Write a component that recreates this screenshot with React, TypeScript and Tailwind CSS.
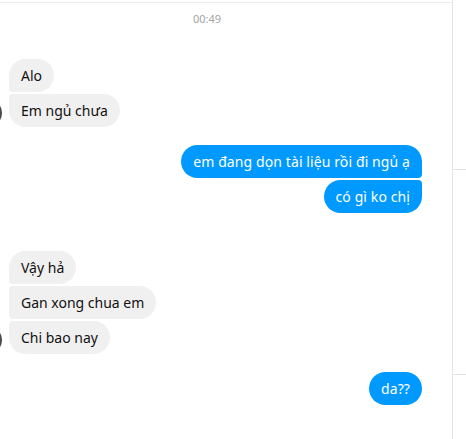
const left = [
  [{ text: "Alo" }, { text: "Em ngủ chưa", avatar: true }],
  [{ text: "Vậy hả" }, { text: "Gan xong chua em" }, { text: "Chi bao nay", avatar: true }],
];

function Them({ text, avatar, first, last }: { text: string; avatar?: boolean; first: boolean; last: boolean }) {
  return (
    <div className="flex items-end">
      <div className={`ml-[-26px] mr-[7px] h-7 w-7 shrink-0 rounded-full ${avatar ? "bg-[#4a4a4a]" : ""}`} />
      <div
        className={`bg-[#f1f0f0] px-3 py-[6px] text-[14px] leading-[21px] text-[#111111] rounded-r-[17px] ${
          first ? "rounded-tl-[17px]" : "rounded-tl-[4px]"
        } ${last ? "rounded-bl-[17px]" : "rounded-bl-[4px]"}`}
      >
        {text}
      </div>
    </div>
  );
}

function Me({ text, first, last }: { text: string; first: boolean; last: boolean }) {
  return (
    <div className="flex justify-end">
      <div
        className={`bg-[#0099ff] px-3 py-[6px] text-[14px] leading-[21px] tracking-[0.1px] text-white rounded-l-[17px] ${
          first ? "rounded-tr-[17px]" : "rounded-tr-[4px]"
        } ${last ? "rounded-br-[17px]" : "rounded-br-[4px]"}`}
      >
        {text}
      </div>
    </div>
  );
}

export default function App() {
  const mine = ["em đang dọn tài liệu rồi đi ngủ ạ", "có gì ko chị"];
  return (
    <div className="flex h-[439px] w-[466px] overflow-hidden bg-white font-['Noto_Sans',sans-serif]">
      <div className="flex w-[453px] shrink-0 flex-col border-r border-[#e3e3e3]">
        <div className="mt-[2px] border-t border-[#ececec]" />
        <div className="flex flex-col pr-[30px]">
          <div className="mt-[8px] pr-2 text-center text-[11px] leading-4 text-[#a4a4a4]">00:49</div>

          <div className="mt-[32px] flex flex-col gap-[2px]">
            {left[0].map((m, i) => (
              <Them key={i} text={m.text} avatar={m.avatar} first={i === 0} last={i === left[0].length - 1} />
            ))}
          </div>

          <div className="mt-[18px] flex flex-col gap-[2px]">
            {mine.map((t, i) => (
              <Me key={i} text={t} first={i === 0} last={i === mine.length - 1} />
            ))}
          </div>

          <div className="mt-[38px] flex flex-col gap-[2px]">
            {left[1].map((m, i) => (
              <Them key={i} text={m.text} avatar={m.avatar} first={i === 0} last={i === left[1].length - 1} />
            ))}
          </div>

          <div className="mt-[18px]">
            <Me text="da??" first last />
          </div>
        </div>
      </div>
      <div className="flex flex-1 flex-col">
        <div className="h-[170px] border-b border-[#e3e3e3]" />
        <div className="h-[205px] border-b border-[#e3e3e3]" />
      </div>
    </div>
  );
}
